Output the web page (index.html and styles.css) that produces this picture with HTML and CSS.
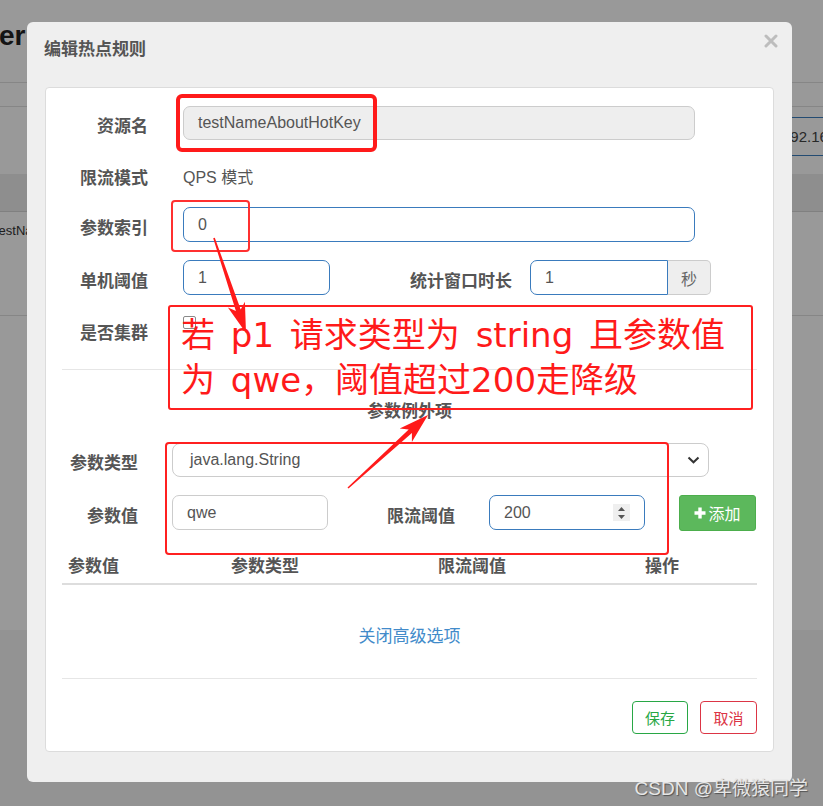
FILE: index.html
```html
<!DOCTYPE html>
<html lang="zh-CN">
<head>
  <meta charset="UTF-8" />
  <meta name="viewport" content="width=device-width, initial-scale=1" />
  <title>编辑热点规则</title>
  <link rel="stylesheet" href="styles.css">
</head>
<body>
  <!-- page behind the dialog -->
  <div class="page">
    <div class="page-head"><h1>er</h1></div>
    <div class="page-sub"></div>
    <div class="page-tools">
      <div class="ip-box">192.168.1.105:8719</div>
    </div>
    <div class="page-thead"></div>
    <div class="page-row"><span>testNameAboutHotKey</span></div>
  </div>

  <div class="backdrop"></div>

  <div class="modal">
    <div class="modal-header">
      <h4>编辑热点规则</h4>
      <svg class="close" width="14" height="14" viewBox="0 0 14 14">
        <path d="M2 2 L12 12 M12 2 L2 12" stroke="#bdbdbd" stroke-width="3" stroke-linecap="round"/>
      </svg>
    </div>

    <div class="panel">
      <div class="row row-1">
        <label class="lbl">资源名</label>
        <div class="field field-wide disabled">testNameAboutHotKey</div>
      </div>
      <div class="row row-2">
        <label class="lbl">限流模式</label>
        <div class="static">QPS 模式</div>
      </div>
      <div class="row row-3">
        <label class="lbl">参数索引</label>
        <div class="field field-wide focus">0</div>
      </div>
      <div class="row row-4">
        <label class="lbl">单机阈值</label>
        <div class="field field-sm focus">1</div>
        <label class="lbl-inline">统计窗口时长</label>
        <div class="input-group">
          <div class="field field-grp focus">1</div>
          <span class="addon">秒</span>
        </div>
      </div>
      <div class="row row-5">
        <label class="lbl">是否集群</label>
        <span class="check"></span>
      </div>

      <hr class="sep sep-top">

      <div class="sub-title">参数例外项</div>

      <div class="row ex-row-1">
        <label class="lbl lbl-ex">参数类型</label>
        <div class="field field-select">
          <span>java.lang.String</span>
          <svg width="13" height="8" viewBox="0 0 13 8"><path d="M1.5 1.5 L6.5 6.3 L11.5 1.5" fill="none" stroke="#333" stroke-width="2"/></svg>
        </div>
      </div>
      <div class="row ex-row-2">
        <label class="lbl lbl-ex">参数值</label>
        <div class="field field-val">qwe</div>
        <label class="lbl-inline lbl-limit">限流阈值</label>
        <div class="field field-num focus">
          <span>200</span>
          <span class="spin">
            <svg width="9" height="14" viewBox="0 0 9 14"><path d="M4.5 1 L8 5 L1 5 Z M1 9 L8 9 L4.5 13 Z" fill="#555"/></svg>
          </span>
        </div>
        <button class="btn-add">
          <svg width="12" height="12" viewBox="0 0 12 12"><path d="M6 0.5 V11.5 M0.5 6 H11.5" stroke="#fff" stroke-width="3.4"/></svg>
          添加
        </button>
      </div>

      <div class="ex-table">
        <span class="c1">参数值</span>
        <span class="c2">参数类型</span>
        <span class="c3">限流阈值</span>
        <span class="c4">操作</span>
      </div>

      <div class="toggle"><a href="#">关闭高级选项</a></div>

      <hr class="sep sep-bottom">

      <div class="footer">
        <button class="btn-outline btn-save">保存</button>
        <button class="btn-outline btn-cancel">取消</button>
      </div>
    </div>
  </div>

  <!-- red annotations drawn over the screenshot -->
  <svg class="marks" width="823" height="806" viewBox="0 0 823 806">
    <rect x="178" y="96" width="197" height="54" rx="4" fill="none" stroke="#ff1a1a" stroke-width="4"/>
    <rect x="172" y="201" width="77" height="50" rx="3" fill="none" stroke="#ff3030" stroke-width="2"/>
    <rect x="166" y="443" width="502" height="111" rx="3" fill="none" stroke="#ff2020" stroke-width="2"/>
    <polygon points="213.2,238.3 235.9,311.0 227.9,307.5 246,333 244.9,301.7 240.7,309.4 214.8,237.7" fill="#ff1a1a"/>
    <polygon points="348.5,488.6 411.9,433.0 411.9,441.9 428,415 399.7,428.5 408.7,429.4 347.5,487.4" fill="#ff1a1a"/>
  </svg>
  <div class="note">若 p1 请求类型为 string 且参数值<br>为 qwe，阈值超过200走降级</div>

  <div class="watermark">CSDN @卑微猿同学</div>
</body>
</html>
```

FILE: styles.css
```css
body {
  margin: 0;
  width: 823px;
  height: 806px;
  overflow: hidden;
  position: relative;
  background: #f6f6f6;
  font-family: "Liberation Sans", "Noto Sans CJK SC", sans-serif;
  color: #555;
}

/* page behind */
.page {
  background: #fff;
  height: 630px;
  overflow: hidden;
}
.page-head {
  height: 83px;
  box-sizing: border-box;
  border-bottom: 1px solid #e0e0e0;
  padding-top: 22px;
}
.page-head h1 {
  margin: 0 0 0 -1px;
  font-size: 28px;
  line-height: 1;
  font-weight: 700;
  color: #222;
}
.page-sub {
  height: 23px;
  border-bottom: 1px solid #e0e0e0;
}
.page-tools {
  height: 67px;
  box-sizing: border-box;
  padding-top: 10px;
  display: flex;
  justify-content: flex-end;
}
.ip-box {
  width: 200px;
  margin-right: -149px;
  height: 39px;
  box-sizing: border-box;
  border: 1px solid #3b7dbf;
  padding-left: 9px;
  font-size: 15px;
  line-height: 37px;
  color: #444;
  white-space: nowrap;
}
.page-thead {
  height: 37px;
  background: #ededed;
  border-bottom: 1px solid #d6d6d6;
}
.page-row {
  height: 104px;
  border-bottom: 1px solid #e0e0e0;
  padding-top: 11px;
  box-sizing: border-box;
  font-size: 13px;
  line-height: 16px;
  color: #333;
}
.page-row span {
  margin-left: -5px;
}

.backdrop {
  position: absolute;
  inset: 0;
  background: rgba(0, 0, 0, 0.4);
}

/* dialog */
.modal {
  position: absolute;
  left: 27px;
  top: 22px;
  width: 765px;
  height: 760px;
  box-sizing: border-box;
  background: #efefef;
  border-radius: 6px;
  padding: 0 18px;
}
.modal-header {
  height: 65px;
  display: flex;
  justify-content: space-between;
  align-items: flex-start;
  padding: 16px 0 0 0;
  box-sizing: border-box;
}
.modal-header h4 {
  margin: 0 0 0 -1px;
  font-size: 17px;
  line-height: 24px;
  font-weight: 700;
  color: #555;
}
.close {
  margin: -4px -4px 0 0;
}
.panel {
  background: #fff;
  border: 1px solid #dcdcdc;
  border-radius: 4px;
  height: 665px;
  box-sizing: border-box;
  padding: 18px 16px 0 16px;
}

.row {
  display: flex;
  align-items: center;
  height: 34px;
}
.row-1 { margin-bottom: 18px; }
.row-2 { margin-bottom: 15px; }
.row-3 { height: 35px; margin-bottom: 18px; }
.row-4 { height: 35px; margin-bottom: 18px; }

.lbl {
  width: 86px;
  flex: none;
  text-align: right;
  font-size: 17px;
  font-weight: 700;
  color: #555;
  margin-right: 35px;
  padding-top: 3px;
}
.lbl-inline {
  flex: none;
  font-size: 17px;
  font-weight: 700;
  color: #555;
  margin-left: 80px;
  margin-right: 18px;
  padding-top: 3px;
}
.static {
  font-size: 16px;
  padding-top: 1px;
}

.field {
  height: 100%;
  box-sizing: border-box;
  border: 1px solid #ccc;
  border-radius: 7px;
  padding: 0 14px;
  font-size: 16px;
  color: #555;
  display: flex;
  align-items: center;
  background: #fff;
}
.field.focus {
  border-color: #3a7bbd;
}
.field.disabled {
  background: #eee;
}
.field-wide { width: 512px; }
.field-sm { width: 147px; }
.input-group {
  display: flex;
  height: 100%;
}
.field-grp {
  width: 138px;
  border-radius: 7px 0 0 7px;
}
.addon {
  width: 43px;
  box-sizing: border-box;
  border: 1px solid #ccc;
  border-left: none;
  border-radius: 0 5px 5px 0;
  background: #eee;
  display: flex;
  align-items: center;
  justify-content: center;
  font-size: 16px;
  color: #666;
}
.check {
  width: 11px;
  height: 11px;
  border: 1px solid #8a8a8a;
  border-radius: 2px;
  align-self: flex-start;
  margin-top: 3px;
}

.sep {
  border: none;
  border-top: 1px solid #e6e6e6;
  margin: 0;
}
.sep-top { margin-top: 22px; }

.sub-title {
  text-align: center;
  font-size: 17px;
  font-weight: 700;
  line-height: 24px;
  margin-top: 30px;
  margin-bottom: 19px;
  color: #555;
}

.lbl-ex {
  width: 76px;
  margin-right: 34px;
}
.ex-row-1 { margin-bottom: 18px; }
.ex-row-2 { height: 35px; }
.field-select {
  width: 537px;
  justify-content: space-between;
  padding: 0 8px 0 17px;
  border-radius: 8px;
}
.field-val { width: 156px; }
.lbl-limit {
  margin-left: 59px;
  margin-right: 34px;
}
.field-num {
  width: 156px;
  justify-content: space-between;
  padding: 0 14px 0 14px;
}
.spin {
  width: 17px;
  height: 17px;
  background: #efefef;
  display: flex;
  align-items: center;
  justify-content: center;
}
.btn-add {
  margin-left: 34px;
  width: 77px;
  height: 36px;
  border: 1px solid #4cae4c;
  border-radius: 3px;
  background: #5cb85c;
  color: #fff;
  font-family: inherit;
  font-size: 16px;
  display: flex;
  align-items: center;
  justify-content: center;
  gap: 2px;
  padding: 0;
}

.ex-table {
  margin-top: 18px;
  height: 32px;
  padding-bottom: 3px;
  display: flex;
  align-items: center;
  border-bottom: 2px solid #ddd;
  font-size: 17px;
  font-weight: 700;
  color: #555;
}
.ex-table span {
  padding-left: 6px;
  box-sizing: border-box;
}
.c1 { width: 163px; }
.c2 { width: 207px; }
.c3 { width: 207px; }
.c4 { width: 118px; }

.toggle {
  text-align: center;
  margin-top: 40px;
  margin-bottom: 29px;
  line-height: 24px;
}
.toggle a {
  color: #428bca;
  font-size: 17px;
  text-decoration: none;
}

.footer {
  margin-top: 22px;
  display: flex;
  justify-content: flex-end;
  gap: 12px;
}
.btn-outline {
  height: 33px;
  background: #fff;
  border-radius: 4px;
  font-family: inherit;
  font-size: 15px;
  padding: 0;
}
.btn-save {
  width: 56px;
  border: 1px solid #28a745;
  color: #28a745;
}
.btn-cancel {
  width: 57px;
  border: 1px solid #dc3545;
  color: #dc3545;
}

/* annotations */
.marks {
  position: absolute;
  left: 0;
  top: 0;
}
.note {
  position: absolute;
  left: 168px;
  top: 305px;
  width: 585px;
  height: 105px;
  box-sizing: border-box;
  border: 2px solid #ff2020;
  border-radius: 3px;
  padding: 6px 0 0 11px;
  font-family: "DejaVu Sans", "Noto Sans CJK SC", sans-serif;
  font-size: 34px;
  line-height: 45px;
  word-spacing: 5px;
  color: #ff1a1a;
  white-space: nowrap;
}

.watermark {
  position: absolute;
  right: 15px;
  bottom: 6px;
  font-size: 19px;
  color: #e6e6e6;
  text-shadow: 1px 1px 1px rgba(0, 0, 0, 0.45);
  font-family: "Liberation Sans", "Noto Sans CJK SC", sans-serif;
}
```
